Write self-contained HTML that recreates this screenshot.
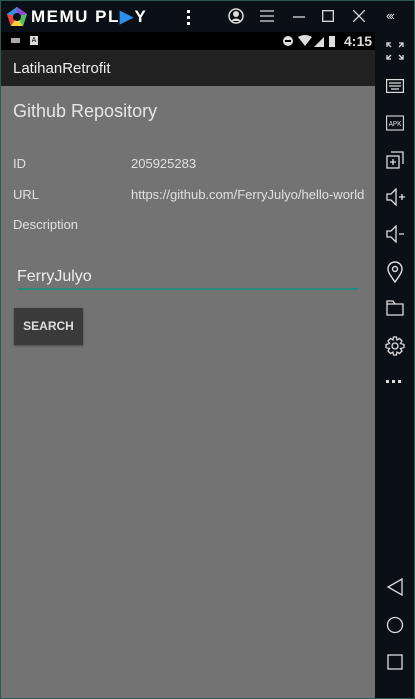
<!DOCTYPE html>
<html><head><meta charset="utf-8"><style>
*{margin:0;padding:0;box-sizing:border-box}
body{width:415px;height:699px;background:#2b5a50;position:relative;overflow:hidden;font-family:"Liberation Sans",sans-serif}
.top{position:absolute;left:1px;top:1px;width:413px;height:31px;background:#0b0f16}
.side{position:absolute;left:375px;top:32px;width:39px;height:666px;background:#0b0f16}
.status{position:absolute;left:1px;top:32px;width:374px;height:18px;background:#000}
.appbar{position:absolute;left:1px;top:50px;width:374px;height:36px;background:#212121;color:#eee;font-size:15px;padding:10px 0 0 12px}
.content{position:absolute;left:1px;top:86px;width:374px;height:612px;background:#737373;color:#ddd}
.t{position:absolute;font-size:13px;color:#e0e0e0}
svg{position:absolute}
</style></head><body>
<div class="top">
 <svg style="left:5px;top:5px" width="22" height="22" viewBox="0 0 22 22"><polygon points="11,1 21,8 17,20 5,20 1,8" fill="#f4a62a"/><polygon points="11,1 21,8 11,11" fill="#8a4bd8"/><polygon points="1,8 11,1 11,11" fill="#3a8de0"/><polygon points="1,8 11,11 5,20" fill="#e8453c"/><polygon points="5,20 11,11 17,20" fill="#f7d23c"/><polygon points="17,20 11,11 21,8" fill="#4bc06a"/><circle cx="11" cy="11" r="4" fill="#0b0f16"/></svg>
 <div style="position:absolute;left:30px;top:6px;color:#fff;font-weight:bold;font-size:17px;letter-spacing:1.5px">MEMU PL<span style="color:#2a8fe8">▶</span>Y</div>
 <div style="position:absolute;left:186px;top:9px;width:3px;height:3px;background:#fff;box-shadow:0 6px #fff,0 12px #fff"></div>
 <svg style="left:227px;top:7px" width="16" height="16" viewBox="0 0 16 16"><circle cx="8" cy="8" r="7" fill="none" stroke="#ddd" stroke-width="1.5"/><circle cx="8" cy="6" r="3" fill="#ddd"/><path d="M3 13 Q8 8 13 13" fill="#ddd"/></svg>
 <svg style="left:259px;top:9px" width="14" height="12"><path d="M0 1H14M0 6H14M0 11H14" stroke="#ddd" stroke-width="1.3"/></svg>
 <svg style="left:292px;top:15px" width="12" height="2"><path d="M0 1H12" stroke="#ddd" stroke-width="1.3"/></svg>
 <svg style="left:321px;top:9px" width="12" height="12"><rect x="0.7" y="0.7" width="10.6" height="10.6" fill="none" stroke="#ddd" stroke-width="1.3"/></svg>
 <svg style="left:352px;top:9px" width="12" height="12"><path d="M0 0L12 12M12 0L0 12" stroke="#ddd" stroke-width="1.3"/></svg>
 <div style="position:absolute;left:385px;top:7px;color:#ddd;font-size:13px;letter-spacing:-2px">‹‹‹</div>
</div>
<div class="status">
 <div style="position:absolute;left:10px;top:6px;width:9px;height:5px;background:#aaa"></div>
 <div style="position:absolute;left:29px;top:4px;width:8px;height:9px;background:#ddd;font-size:7px;color:#000;text-align:center;line-height:9px">A</div>
 <div style="position:absolute;left:282px;top:4px;width:10px;height:10px;border-radius:50%;background:#ddd"><div style="margin:4px 2px;height:2px;background:#000"></div></div>
 <svg style="left:297px;top:3px" width="45" height="13"><path d="M0 2Q7 -2 14 2L7 11Z" fill="#ddd"/><path d="M16 12L26 2V12Z" fill="#ddd"/><rect x="31" y="1" width="6" height="11" fill="#ddd"/></svg>
 <div style="position:absolute;left:343px;top:1px;color:#ddd;font-size:14px;font-weight:bold">4:15</div>
</div>
<div class="appbar">LatihanRetrofit</div>
<div class="content">
 <div class="t" style="left:12px;top:15px;font-size:18px;color:#e6e6e6">Github Repository</div>
 <div class="t" style="left:12px;top:70px">ID</div>
 <div class="t" style="left:130px;top:70px">205925283</div>
 <div class="t" style="left:12px;top:101px">URL</div>
 <div class="t" style="left:130px;top:101px;font-size:13px;white-space:nowrap">https://github.com/FerryJulyo/hello-world</div>
 <div class="t" style="left:12px;top:131px">Description</div>
 <div class="t" style="left:16px;top:182px;font-size:16px;color:#eee">FerryJulyo</div>
 <div style="position:absolute;left:16px;top:202px;width:342px;height:2px;background:#26897a"></div>
 <div style="position:absolute;left:13px;top:222px;width:69px;height:37px;background:#3a3a3a;box-shadow:0 1px 2px rgba(0,0,0,.4);color:#ddd;font-size:12px;font-weight:bold;text-align:center;line-height:37px">SEARCH</div>
</div>
<div class="side">
 <svg style="left:11px;top:10px" width="18" height="18" fill="none" stroke="#ddd" stroke-width="1.3"><path d="M1 5V1H5M1 1L5 5M13 1H17V5M17 1L13 5M1 13V17H5M1 17L5 13M17 13V17H13M17 17L13 13"/></svg>
 <svg style="left:11px;top:47px" width="18" height="14" fill="none" stroke="#ddd" stroke-width="1.2"><rect x="0.6" y="0.6" width="16.8" height="12.8"/><path d="M3 4H15M3 7H15M5 10H13"/></svg>
 <svg style="left:11px;top:82px" width="18" height="18"><rect x="0.6" y="2" width="16.8" height="14" fill="none" stroke="#ddd" stroke-width="1.1"/><text x="9" y="12" font-size="7" fill="#ddd" text-anchor="middle" font-family="Liberation Mono">APK</text></svg>
 <svg style="left:11px;top:119px" width="18" height="18" fill="none" stroke="#ddd" stroke-width="1.3"><rect x="1" y="5" width="12" height="12"/><path d="M5 1H17V13M4 11H10M7 8V14"/></svg>
 <svg style="left:11px;top:156px" width="20" height="18" fill="none" stroke="#ddd" stroke-width="1.3"><path d="M1 6H5L10 1V17L5 12H1Z M13 9H19M16 6V12"/></svg>
 <svg style="left:11px;top:193px" width="20" height="18" fill="none" stroke="#ddd" stroke-width="1.3"><path d="M1 6H5L10 1V17L5 12H1Z M13 9H18"/></svg>
 <svg style="left:12px;top:229px" width="16" height="22" fill="none" stroke="#ddd" stroke-width="1.4"><path d="M8 21C3 14 1 11 1 8A7 7 0 0 1 15 8C15 11 13 14 8 21Z"/><circle cx="8" cy="8" r="2.5"/></svg>
 <svg style="left:11px;top:268px" width="18" height="16" fill="none" stroke="#ddd" stroke-width="1.3"><path d="M1 1H7L9 4H17V15H1Z M1 4H9"/></svg>
 <svg style="left:10px;top:304px" width="20" height="20" fill="none" stroke="#ddd" stroke-width="1.3"><circle cx="10" cy="10" r="3"/><path d="M8.5 1H11.5L12 4L14.5 2.5L17 5L15.5 7.5L19 8.5V11.5L15.5 12.5L17 15L14.5 17.5L12 16L11.5 19H8.5L8 16L5.5 17.5L3 15L4.5 12.5L1 11.5V8.5L4.5 7.5L3 5L5.5 2.5L8 4Z"/></svg>
 <div style="position:absolute;left:11px;top:348px;width:3px;height:3px;background:#ddd;box-shadow:6px 0 #ddd,12px 0 #ddd"></div>
 <svg style="left:11px;top:546px" width="18" height="18" fill="none" stroke="#ddd" stroke-width="1.3"><path d="M16 1V17L2 9Z"/></svg>
 <svg style="left:11px;top:584px" width="18" height="18" fill="none" stroke="#ddd" stroke-width="1.3"><circle cx="9" cy="9" r="7.5"/></svg>
 <svg style="left:12px;top:622px" width="16" height="16" fill="none" stroke="#ddd" stroke-width="1.3"><rect x="1" y="1" width="14" height="14"/></svg>
</div>
</body></html>
